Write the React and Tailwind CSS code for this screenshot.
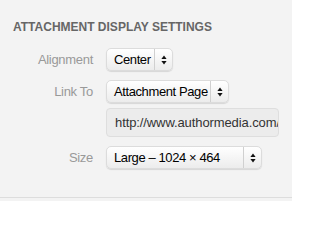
function Arrows() {
  return (
    <svg width="6" height="10" viewBox="0 0 6 10" className="block">
      <path d="M3 0.5 L5.6 4 H0.4 Z" fill="#111" />
      <path d="M3 9.5 L5.6 6 H0.4 Z" fill="#111" />
    </svg>
  )
}

function Select({ label, width }) {
  return (
    <div
      className="flex h-[23px] items-stretch rounded-[5px] border border-[#dcdcdc] bg-gradient-to-b from-white to-[#ececec] shadow-[0_1px_1px_rgba(0,0,0,0.12)]"
      style={{ width }}
    >
      <div className="flex flex-1 items-center whitespace-nowrap pl-[7px] text-[13px] leading-none tracking-[-0.4px] text-black">{label}</div>
      <div className="flex w-[18px] items-center justify-center border-l border-[#d0d0d0]">
        <Arrows />
      </div>
    </div>
  )
}

function Row({ label, children, className = '' }) {
  return (
    <div className={`flex items-center ${className}`}>
      <div className="w-[93px] text-right text-[13px] leading-none tracking-[-0.3px] text-[#999]">{label}</div>
      <div className="ml-[13px]">{children}</div>
    </div>
  )
}

export default function App() {
  return (
    <div className="h-[201px] w-[292px] overflow-hidden bg-[#f3f3f3] font-['Liberation_Sans',Arial,sans-serif]">
      <div className="h-[198px] border-b border-[#dddddd]">
        <h3 className="pl-[13px] pt-[21px] text-[12px] font-bold leading-[12px] text-[#666]">ATTACHMENT DISPLAY SETTINGS</h3>
        <div className="mt-[15px] flex flex-col">
          <Row label="Alignment">
            <Select label="Center" width={67} />
          </Row>
          <Row label="Link To" className="mt-[9px]">
            <Select label="Attachment Page" width={123} />
          </Row>
          <div className="mt-[5px] ml-[106px] flex h-[29px] w-[173px] items-center overflow-hidden whitespace-nowrap rounded-[4px] border border-[#dedede] bg-[#ececec] pl-[8px] text-[13px] tracking-[-0.1px] text-[#333]">
            http://www.authormedia.com/
          </div>
          <Row label="Size" className="mt-[9px]">
            <Select label="Large – 1024 × 464" width={156} />
          </Row>
        </div>
      </div>
    </div>
  )
}
